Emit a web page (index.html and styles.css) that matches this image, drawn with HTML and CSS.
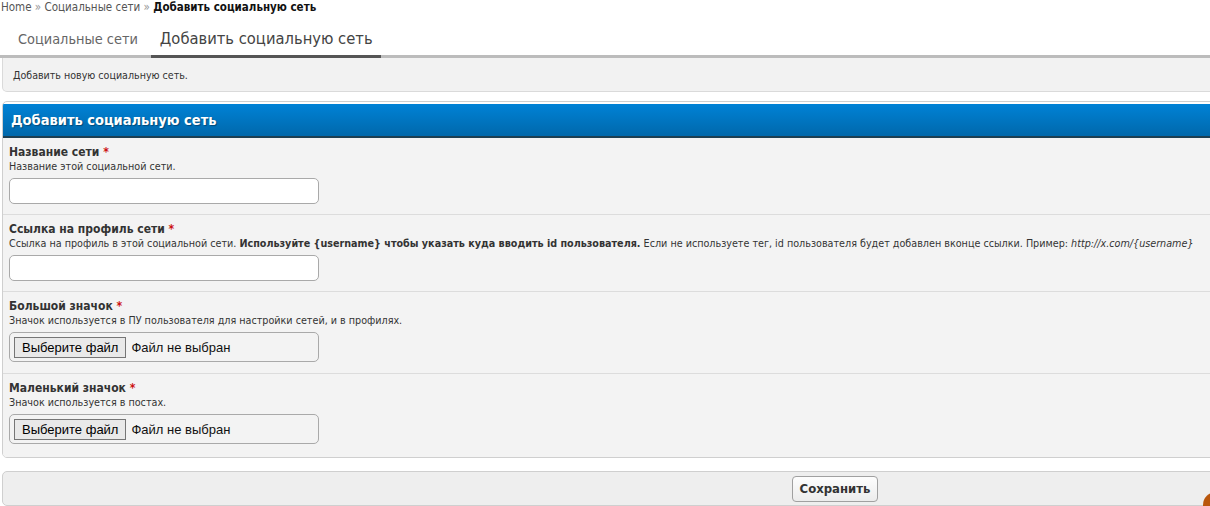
FILE: index.html
```html
<!DOCTYPE html>
<html lang="ru">
<head>
<meta charset="utf-8">
<title>Добавить социальную сеть</title>
<link rel="stylesheet" href="styles.css">
</head>
<body>
<div class="page">
  <div class="inner">
    <div class="breadcrumb">
      <a class="crumb" href="#">Home</a> <span class="sep">»</span> <a class="crumb" href="#">Социальные сети</a> <span class="sep">»</span> <span class="current">Добавить социальную сеть</span>
    </div>

    <div class="tabs">
      <a class="tab" href="#">Социальные сети</a>
      <a class="tab active" href="#">Добавить социальную сеть</a>
    </div>

    <div class="desc-box">Добавить новую социальную сеть.</div>

    <form class="panel">
      <h2 class="panel-head">Добавить социальную сеть</h2>

      <div class="row">
        <div class="label">Название сети <span class="req">*</span></div>
        <div class="hint">Название этой социальной сети.</div>
        <input class="text-input" type="text">
      </div>

      <div class="row">
        <div class="label">Ссылка на профиль сети <span class="req">*</span></div>
        <div class="hint">Ссылка на профиль в этой социальной сети. <b>Используйте {username} чтобы указать куда вводить id пользователя.</b> Если не используете тег, id пользователя будет добавлен вконце ссылки. Пример: <i>http://x.com/{username}</i></div>
        <input class="text-input" type="text">
      </div>

      <div class="row row-file">
        <div class="label">Большой значок <span class="req">*</span></div>
        <div class="hint">Значок используется в ПУ пользователя для настройки сетей, и в профилях.</div>
        <div class="file-box"><span class="file-btn">Выберите файл</span><span class="file-name">Файл не выбран</span></div>
      </div>

      <div class="row row-file row-last">
        <div class="label">Маленький значок <span class="req">*</span></div>
        <div class="hint">Значок используется в постах.</div>
        <div class="file-box"><span class="file-btn">Выберите файл</span><span class="file-name">Файл не выбран</span></div>
      </div>
    </form>

    <div class="footer-bar">
      <button class="save" type="button">Сохранить</button>
    </div>
  </div>

  <div class="orb"></div>
</div>
</body>
</html>
```

FILE: styles.css
```css
html, body {
  margin: 0;
  padding: 0;
  background: #fff;
  overflow: hidden;
}
body {
  font-family: "DejaVu Sans Condensed", "DejaVu Sans", sans-serif;
  color: #333;
}
.page {
  position: relative;
  width: 1210px;
  height: 506px;
  overflow: hidden;
}
.inner {
  width: 1668px;
}
.breadcrumb {
  font-size: 11.5px;
  line-height: 14px;
  padding: 0 0 0 1px;
  color: #555;
}
.crumb {
  color: #555;
  text-decoration: none;
}
.sep {
  color: #999;
}
.current {
  font-weight: bold;
  color: #111;
}
.tabs {
  display: flex;
  align-items: flex-end;
  gap: 5px;
  margin-top: 12px;
  padding-left: 9px;
  border-bottom: 3px solid #bcbcbc;
  height: 29px;
}
.tab {
  display: block;
  padding: 0 8px 0 9px;
  font-size: 14.4px;
  line-height: 26px;
  height: 29px;
  color: #666;
  text-decoration: none;
  border-bottom: 3px solid transparent;
  margin-bottom: -3px;
}
.tab.active {
  font-size: 16.4px;
  color: #444;
  border-bottom-color: #555;
}
.desc-box {
  margin: 0 0 0 2px;
  background: #f2f2f2;
  border: 1px solid #dadada;
  border-top: none;
  border-radius: 0 0 5px 5px;
  height: 34px;
  box-sizing: border-box;
  padding: 10px 10px 0 10px;
  font-size: 10.6px;
  line-height: 14px;
  color: #333;
}
.panel {
  margin: 9px 0 0 2px;
  border: 1px solid #cfcfcf;
  border-radius: 5px;
  padding: 2px 0 0 0;
  background: #fff;
  overflow: hidden;
}
.panel-head {
  margin: 0;
  height: 34px;
  box-sizing: border-box;
  background: linear-gradient(#0082d6, #0068ab);
  border-bottom: 2px solid #1d3f52;
  color: #fff;
  font-size: 14.5px;
  font-weight: bold;
  line-height: 32px;
  padding-left: 8px;
  text-shadow: 1px 1px 1px rgba(0,0,0,0.35);
}
.row {
  background: #f3f3f3;
  border-bottom: 1px solid #dcdcdc;
  padding: 7px 6px 10px 6px;
}
.row-file {
  padding-bottom: 11px;
}
.row-last {
  border-bottom: none;
  padding-bottom: 13px;
}
.label {
  font-size: 12px;
  font-weight: bold;
  line-height: 15px;
  color: #333;
}
.req {
  color: #cc1010;
}
.hint {
  font-size: 10.7px;
  line-height: 13px;
  color: #333;
  margin-bottom: 5px;
  white-space: nowrap;
}
.text-input {
  display: block;
  width: 310px;
  height: 26px;
  box-sizing: border-box;
  border: 1px solid #a9a9a9;
  border-radius: 5px;
  background: #fff;
  margin: 0;
  padding: 0 4px;
}
.file-box {
  display: flex;
  align-items: center;
  width: 310px;
  height: 30px;
  box-sizing: border-box;
  border: 1px solid #a9a9a9;
  border-radius: 5px;
  padding: 0 4px;
  font-family: "Liberation Sans", Arial, sans-serif;
  font-size: 13px;
  color: #111;
}
.file-btn {
  display: inline-block;
  background: #e9e9e9;
  border: 1px solid #767676;
  height: 21px;
  line-height: 19px;
  box-sizing: border-box;
  padding: 0 7px;
  margin-right: 5px;
  color: #000;
}
.file-name {
  color: #111;
}
.footer-bar {
  margin: 13px 0 0 2px;
  height: 35px;
  box-sizing: border-box;
  background: #eeeeee;
  border: 1px solid #cfcfcf;
  border-radius: 5px;
  display: flex;
  justify-content: center;
  align-items: center;
}
.save {
  font-family: "DejaVu Sans Condensed", "DejaVu Sans", sans-serif;
  font-size: 13px;
  font-weight: bold;
  color: #333;
  background: linear-gradient(#fdfdfd, #ececec);
  border: 1px solid #a0a0a0;
  border-radius: 4px;
  height: 26px;
  padding: 0 7px;
}
.orb {
  position: absolute;
  left: 1203px;
  top: 492px;
  width: 26px;
  height: 26px;
  border-radius: 50%;
  background: #b9560c;
}
```
